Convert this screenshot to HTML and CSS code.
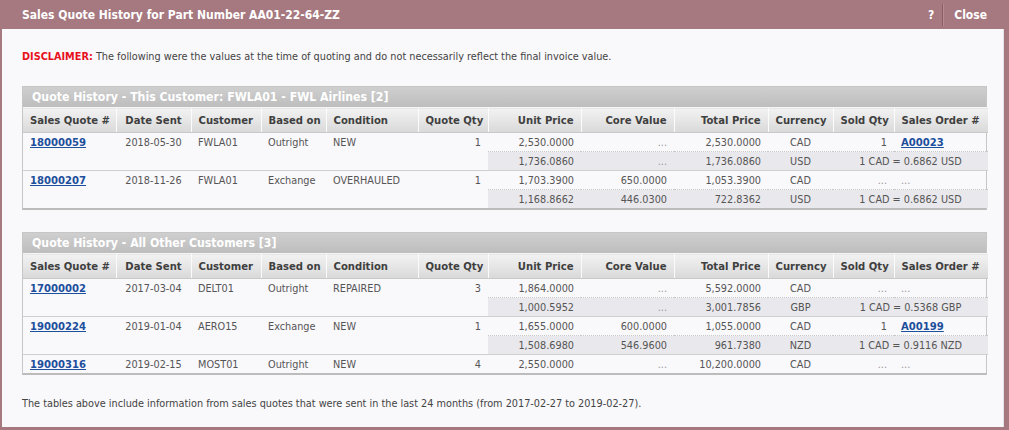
FILE: index.html
```html
<!DOCTYPE html>
<html>
<head>
<meta charset="utf-8">
<link rel="stylesheet" href="styles.css">
</head>
<body>
<div class="dialog">
  <div class="titlebar">
    <span class="title">Sales Quote History for Part Number AA01-22-64-ZZ</span>
    <div class="actions">
      <span class="help">?</span>
      <span class="sep"></span>
      <span class="close">Close</span>
    </div>
  </div>
  <div class="content">
    <p class="disclaimer"><b>DISCLAIMER:</b> The following were the values at the time of quoting and do not necessarily reflect the final invoice value.</p>

    <div class="panel">
      <div class="panel-head">Quote History - This Customer: FWLA01 - FWL Airlines [2]</div>
      <table class="grid">
        <colgroup>
          <col class="c93"><col class="c75"><col class="c70"><col class="c65"><col class="c92"><col class="c70">
          <col class="c93"><col class="c93"><col class="c94"><col class="c65"><col class="c61"><col class="c94">
        </colgroup>
        <thead>
          <tr>
            <th class="l">Sales Quote #</th><th class="c">Date Sent</th><th class="l">Customer</th><th class="l">Based on</th><th class="l">Condition</th><th class="r">Quote Qty</th>
            <th class="r">Unit Price</th><th class="r">Core Value</th><th class="r">Total Price</th><th class="c">Currency</th><th class="r">Sold Qty</th><th class="l">Sales Order #</th>
          </tr>
        </thead>
        <tbody>
          <tr class="main first">
            <td rowspan="2" class="l"><a href="#">18000059</a></td><td rowspan="2" class="c">2018-05-30</td><td rowspan="2" class="l">FWLA01</td><td rowspan="2" class="l">Outright</td><td rowspan="2" class="l">NEW</td><td rowspan="2" class="r">1</td>
            <td class="r">2,530.0000</td><td class="r dim">...</td><td class="r">2,530.0000</td><td class="c">CAD</td><td class="r">1</td><td class="l"><a href="#">A00023</a></td>
          </tr>
          <tr class="sub">
            <td class="r">1,736.0860</td><td class="r dim">...</td><td class="r">1,736.0860</td><td class="c">USD</td><td colspan="2" class="c">1 CAD = 0.6862 USD</td>
          </tr>
          <tr class="main">
            <td rowspan="2" class="l"><a href="#">18000207</a></td><td rowspan="2" class="c">2018-11-26</td><td rowspan="2" class="l">FWLA01</td><td rowspan="2" class="l">Exchange</td><td rowspan="2" class="l">OVERHAULED</td><td rowspan="2" class="r">1</td>
            <td class="r">1,703.3900</td><td class="r">650.0000</td><td class="r">1,053.3900</td><td class="c">CAD</td><td class="r dim">...</td><td class="l dim">...</td>
          </tr>
          <tr class="sub">
            <td class="r">1,168.8662</td><td class="r">446.0300</td><td class="r">722.8362</td><td class="c">USD</td><td colspan="2" class="c">1 CAD = 0.6862 USD</td>
          </tr>
        </tbody>
      </table>
    </div>

    <div class="panel">
      <div class="panel-head">Quote History - All Other Customers [3]</div>
      <table class="grid">
        <colgroup>
          <col class="c93"><col class="c75"><col class="c70"><col class="c65"><col class="c92"><col class="c70">
          <col class="c93"><col class="c93"><col class="c94"><col class="c65"><col class="c61"><col class="c94">
        </colgroup>
        <thead>
          <tr>
            <th class="l">Sales Quote #</th><th class="c">Date Sent</th><th class="l">Customer</th><th class="l">Based on</th><th class="l">Condition</th><th class="r">Quote Qty</th>
            <th class="r">Unit Price</th><th class="r">Core Value</th><th class="r">Total Price</th><th class="c">Currency</th><th class="r">Sold Qty</th><th class="l">Sales Order #</th>
          </tr>
        </thead>
        <tbody>
          <tr class="main first">
            <td rowspan="2" class="l"><a href="#">17000002</a></td><td rowspan="2" class="c">2017-03-04</td><td rowspan="2" class="l">DELT01</td><td rowspan="2" class="l">Outright</td><td rowspan="2" class="l">REPAIRED</td><td rowspan="2" class="r">3</td>
            <td class="r">1,864.0000</td><td class="r dim">...</td><td class="r">5,592.0000</td><td class="c">CAD</td><td class="r dim">...</td><td class="l dim">...</td>
          </tr>
          <tr class="sub">
            <td class="r">1,000.5952</td><td class="r dim">...</td><td class="r">3,001.7856</td><td class="c">GBP</td><td colspan="2" class="c">1 CAD = 0.5368 GBP</td>
          </tr>
          <tr class="main">
            <td rowspan="2" class="l"><a href="#">19000224</a></td><td rowspan="2" class="c">2019-01-04</td><td rowspan="2" class="l">AERO15</td><td rowspan="2" class="l">Exchange</td><td rowspan="2" class="l">NEW</td><td rowspan="2" class="r">1</td>
            <td class="r">1,655.0000</td><td class="r">600.0000</td><td class="r">1,055.0000</td><td class="c">CAD</td><td class="r">1</td><td class="l"><a href="#">A00199</a></td>
          </tr>
          <tr class="sub">
            <td class="r">1,508.6980</td><td class="r">546.9600</td><td class="r">961.7380</td><td class="c">NZD</td><td colspan="2" class="c">1 CAD = 0.9116 NZD</td>
          </tr>
          <tr class="main">
            <td class="l"><a href="#">19000316</a></td><td class="c">2019-02-15</td><td class="l">MOST01</td><td class="l">Outright</td><td class="l">NEW</td><td class="r">4</td>
            <td class="r">2,550.0000</td><td class="r dim">...</td><td class="r">10,200.0000</td><td class="c">CAD</td><td class="r dim">...</td><td class="l dim">...</td>
          </tr>
        </tbody>
      </table>
    </div>

    <p class="note">The tables above include information from sales quotes that were sent in the last 24 months (from 2017-02-27 to 2019-02-27).</p>
  </div>
</div>
</body>
</html>
```

FILE: styles.css
```css
html, body {
  margin: 0;
  padding: 0;
}
body {
  width: 1009px;
  height: 430px;
  background: #a6787f;
  font-family: "DejaVu Sans Condensed", "DejaVu Sans", sans-serif;
  font-size: 10.8px;
  color: #444;
  overflow: hidden;
}
.dialog {
  display: flex;
  flex-direction: column;
  height: 430px;
}
.titlebar {
  height: 29px;
  display: flex;
  align-items: center;
  justify-content: space-between;
  padding: 0 22px 0 22px;
  color: #fff;
  font-weight: bold;
  font-size: 12px;
}
.title {
  font-size: 12px;
}
.actions {
  display: flex;
  align-items: center;
  height: 29px;
}
.help {
  margin-right: 8px;
}
.sep {
  width: 1px;
  height: 22px;
  background: #8c5c64;
  border-right: 1px solid #b58c93;
  margin-right: 10px;
}
.content {
  background: #f9f8fb;
  margin: 0 5px 3px 2px;
  border-right: 1px solid #e4e2e8;
  padding: 21px 15px 0 20px;
  flex: 1;
}
.disclaimer {
  margin: 0 0 22px 0;
  line-height: 14px;
  color: #444;
}
.disclaimer b {
  color: #e8111b;
}
.panel {
  width: 963px;
  border: 1px solid #c6c6c6;
  border-bottom: 2px solid #bcbcbc;
  margin-bottom: 22px;
}
.panel-head {
  height: 20px;
  line-height: 20px;
  background: linear-gradient(#cfcfcf, #bdbdbd);
  color: #fff;
  font-weight: bold;
  font-size: 12.2px;
  padding-left: 9px;
}
.grid {
  width: 963px;
  border-collapse: collapse;
  table-layout: fixed;
}
.c93 { width: 93px; }
.c75 { width: 75px; }
.c70 { width: 70px; }
.c65 { width: 65px; }
.c92 { width: 92px; }
.c94 { width: 94px; }
.c61 { width: 61px; }
.grid th {
  height: 24px;
  padding: 0 7px;
  font-size: 11.2px;
  font-weight: bold;
  color: #3f3f3f;
  background: linear-gradient(#f2f2f2, #d9d9d9);
  border-left: 1px solid #fbfbfb;
  border-top: 1px solid #f6f6f6;
  border-bottom: 1px solid #c9c9c9;
  white-space: nowrap;
}
.grid th:first-child {
  border-left: none;
}
.grid td {
  height: 18px;
  padding: 0 7px;
  color: #555;
  white-space: nowrap;
  vertical-align: middle;
}
.grid td[rowspan] {
  vertical-align: top;
  padding-top: 3px;
}
.grid tr.main td {
  border-top: 1px solid #cfcfcf;
}
.grid tr.first td {
  border-top: none;
}
.grid tr.sub td {
  background: #e9e8ec;
  border-top: 1px dotted #c8c8c8;
}
.l { text-align: left; }
.r { text-align: right; }
.c { text-align: center; }
.dim { color: #999 !important; }
.grid a {
  color: #1c4f9c;
  font-weight: bold;
  font-size: 11.2px;
  text-decoration: underline;
}
.note {
  margin: 20px 0 0 0;
  line-height: 14px;
  color: #444;
}
```
